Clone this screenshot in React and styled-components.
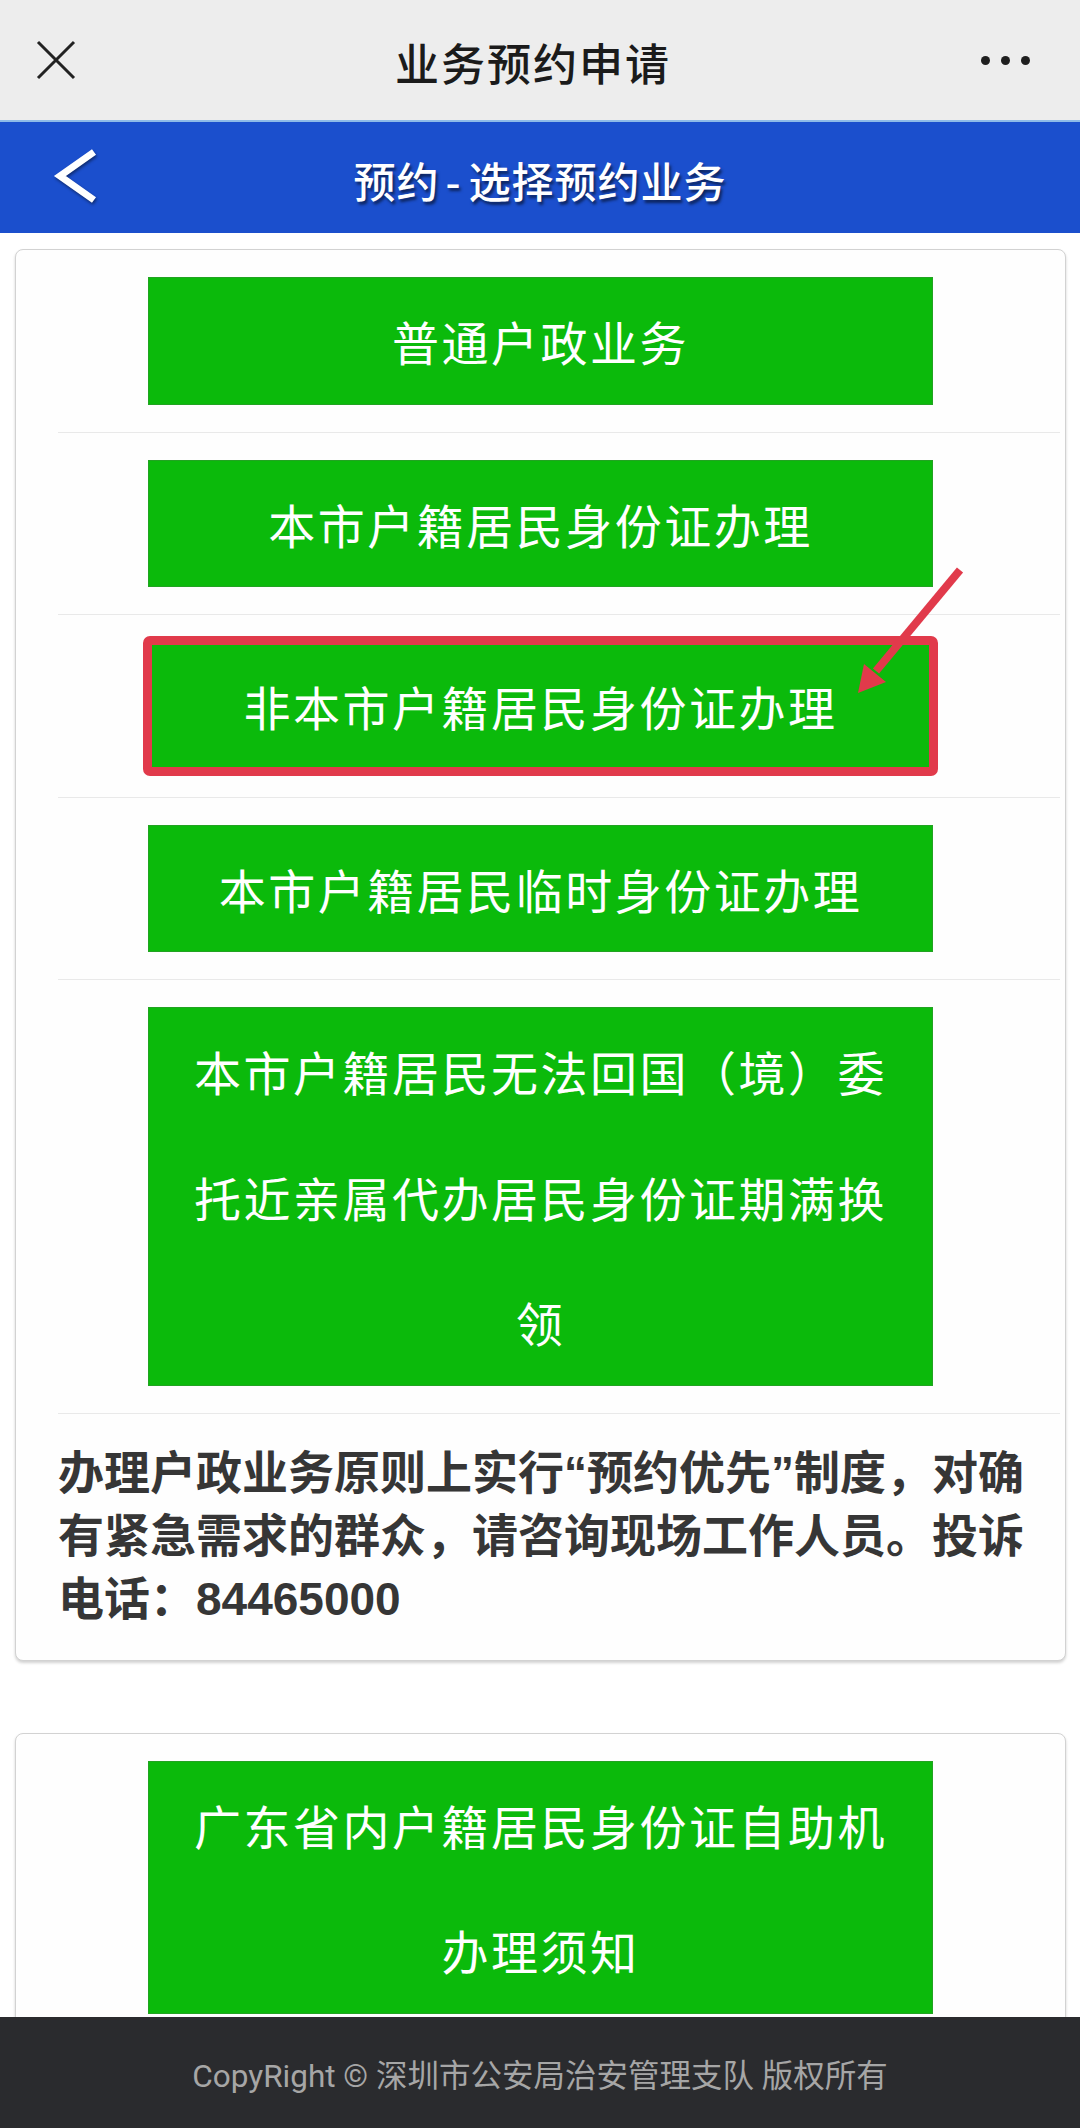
import React from "react";
import styled, { createGlobalStyle } from "styled-components";

const GlobalStyle = createGlobalStyle`
  html, body {
    margin: 0;
    padding: 0;
    background: #ffffff;
    font-family: "Noto Sans CJK SC", "Noto Sans", sans-serif;
  }
  * { box-sizing: border-box; }
`;

const Page = styled.div`
  width: 1080px;
  min-height: 2128px;
  background: #ffffff;
`;

const TopBar = styled.div`
  height: 120px;
  background: #ededed;
  display: grid;
  grid-template-columns: 1fr auto 1fr;
  align-items: center;
  padding: 0 50px 0 36px;
`;

const TopTitle = styled.div`
  font-size: 44px;
  font-weight: 500;
  color: #1b1b1b;
  letter-spacing: 2px;
  line-height: 1;
  padding-top: 4px;
`;

const IconSlot = styled.div`
  display: flex;
  align-items: center;
  justify-content: ${(p) => (p.$end ? "flex-end" : "flex-start")};
`;

const Dots = styled.div`
  display: flex;
  gap: 11px;
`;

const Dot = styled.span`
  width: 9px;
  height: 9px;
  border-radius: 50%;
  background: #1f1f1f;
`;

const HeaderBar = styled.div`
  height: 113px;
  background: #1b4fcd;
  border-top: 2px solid #8fbbe8;
  display: grid;
  grid-template-columns: 1fr auto 1fr;
  align-items: center;
  padding: 0 52px;
`;

const HeaderTitle = styled.div`
  font-size: 42px;
  font-weight: 500;
  color: #ffffff;
  line-height: 1;
  letter-spacing: 1px;
  text-shadow: 2px 3px 3px rgba(0, 0, 0, 0.55);
  padding-top: 4px;
`;

const Dash = styled.span`
  margin: 0 7px 0 6px;
`;

const Main = styled.main`
  padding: 16px 14px 120px 15px;
  display: flex;
  flex-direction: column;
  gap: 72px;
`;

const Card = styled.section`
  background: #fefefe;
  border: 1px solid #d2d2d2;
  border-radius: 8px;
  box-shadow: 0 2px 3px rgba(0, 0, 0, 0.18);
`;

const Row = styled.div`
  margin: 0 5px 0 42px;
  padding: 27px 0 27px;
  border-bottom: ${(p) => (p.$last ? "none" : "1px solid #e9e9e9")};
`;

const ButtonWrap = styled.div`
  position: relative;
  width: 785px;
  margin-left: 90px;
`;

const GreenButton = styled.div`
  width: 785px;
  ${(p) => (p.$wrap ? "" : "margin-left: 90px;")}
  background: #0bba0b;
  border: 1px solid #22a322;
  color: #ffffff;
  font-size: 47px;
  letter-spacing: 2.5px;
  line-height: 125.5px;
  text-align: center;
  padding: 0 34px;
`;

const RedFrame = styled.div`
  position: absolute;
  top: -6px;
  bottom: -6px;
  left: -5px;
  right: -5px;
  border: 9px solid #e13a4b;
  border-radius: 7px;
  pointer-events: none;
`;

const ArrowSvg = styled.svg`
  position: absolute;
  left: 692px;
  top: -85px;
  width: 140px;
  height: 150px;
  overflow: visible;
  pointer-events: none;
`;

const Notice = styled.p`
  margin: 0;
  padding: 1px 13px 2px 0;
  font-family: "Liberation Sans", "Noto Sans CJK SC", sans-serif;
  font-size: 46px;
  font-weight: 700;
  line-height: 63px;
  color: #363636;
`;

const Footer = styled.footer`
  position: fixed;
  left: 0;
  right: 0;
  bottom: 0;
  height: 111px;
  background: #2a2b2e;
  display: flex;
  align-items: center;
  justify-content: center;
  font-family: Roboto, "Noto Sans CJK SC", sans-serif;
  font-size: 31.5px;
  color: #a6a6a6;
`;

const CloseIcon = () => (
  <svg width="40" height="40" viewBox="0 0 40 40">
    <path d="M2 2 L38 38 M38 2 L2 38" stroke="#222" strokeWidth="3" fill="none" />
  </svg>
);

const BackIcon = () => (
  <svg width="50" height="60" viewBox="0 0 50 60" style={{ filter: "drop-shadow(1px 2px 1.5px rgba(0,0,0,0.45))" }}>
    <polyline points="42,4 8,28 42,52" stroke="#fff" strokeWidth="7" fill="none" strokeLinejoin="miter" />
  </svg>
);

const rows = [
  { text: "普通户政业务" },
  { text: "本市户籍居民身份证办理" },
  { text: "非本市户籍居民身份证办理", highlight: true },
  { text: "本市户籍居民临时身份证办理" },
  { text: "本市户籍居民无法回国（境）委托近亲属代办居民身份证期满换领" },
];

export default function App() {
  return (
    <Page>
      <GlobalStyle />
      <TopBar>
        <IconSlot>
          <CloseIcon />
        </IconSlot>
        <TopTitle>业务预约申请</TopTitle>
        <IconSlot $end>
          <Dots>
            <Dot />
            <Dot />
            <Dot />
          </Dots>
        </IconSlot>
      </TopBar>
      <HeaderBar>
        <IconSlot>
          <BackIcon />
        </IconSlot>
        <HeaderTitle>
          预约<Dash>-</Dash>选择预约业务
        </HeaderTitle>
        <div />
      </HeaderBar>
      <Main>
        <Card>
          {rows.map((r) => (
            <Row key={r.text}>
              {r.highlight ? (
                <ButtonWrap>
                  <GreenButton $wrap>{r.text}</GreenButton>
                  <RedFrame />
                  <ArrowSvg viewBox="0 0 140 150">
                    <line x1="120" y1="13" x2="36" y2="114" stroke="#e13a4b" strokeWidth="8" />
                    <polygon points="18,136 46,125 24,107" fill="#e13a4b" />
                  </ArrowSvg>
                </ButtonWrap>
              ) : (
                <GreenButton>{r.text}</GreenButton>
              )}
            </Row>
          ))}
          <Row $last>
            <Notice>
              办理户政业务原则上实行“预约优先”制度，对确有紧急需求的群众，请咨询现场工作人员。投诉电话：84465000
            </Notice>
          </Row>
        </Card>
        <Card>
          <Row $last>
            <GreenButton>广东省内户籍居民身份证自助机办理须知</GreenButton>
          </Row>
        </Card>
      </Main>
      <Footer>CopyRight © 深圳市公安局治安管理支队 版权所有</Footer>
    </Page>
  );
}
